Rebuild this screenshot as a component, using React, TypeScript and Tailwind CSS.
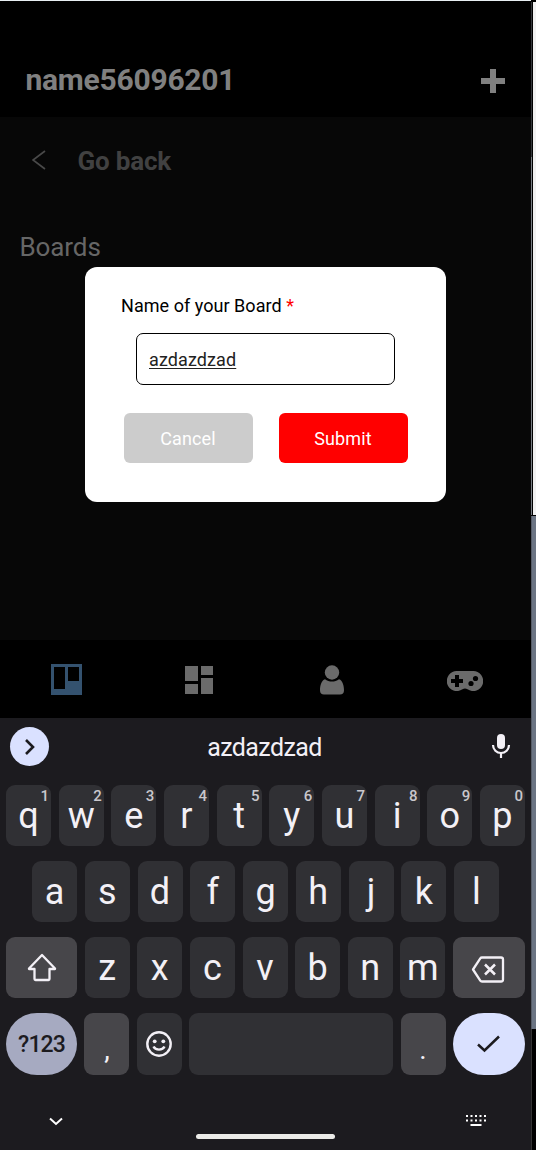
import React from "react";

function Key({ label, hint }: { label: string; hint?: string }) {
  return (
    <div className="relative flex h-[61px] w-[45px] items-center justify-center rounded-[9px] bg-[#303034] text-[36px] leading-none text-[#f3f0f6]">
      <span>{label}</span>
      {hint && (
        <span className="absolute right-[2px] top-[3px] text-[15px] font-medium leading-[16px] text-[#c9c7cc]">{hint}</span>
      )}
    </div>
  );
}

const topRow: [string, string][] = [
  ["q", "1"], ["w", "2"], ["e", "3"], ["r", "4"], ["t", "5"],
  ["y", "6"], ["u", "7"], ["i", "8"], ["o", "9"], ["p", "0"],
];

function Header() {
  return (
    <header className="flex h-[116px] items-start justify-between bg-black pl-[25.5px] pr-[26px] pt-[61px]">
      <h1 className="text-[30px] font-bold leading-[36px] tracking-[-0.25px] text-[#808080]">name56096201</h1>
      <svg className="mt-[7px] block" width="24" height="24" viewBox="0 0 24 24" fill="#808080">
        <path d="M9 0h6v9h9v6h-9v9H9v-9H0V9h9z" />
      </svg>
    </header>
  );
}

function BoardDialog() {
  return (
    <div className="absolute inset-0 flex items-start justify-center pt-[266px]">
      <div className="flex h-[235px] w-[361px] flex-col rounded-[12px] bg-white pt-[27px]">
        <label className="pl-[36px] text-[18px] leading-[24px] tracking-[0.04px] text-black">
          Name of your Board <span className="text-[#ff0000]">*</span>
        </label>
        <div className="ml-[51px] mt-[15px] flex h-[52px] w-[259px] items-center rounded-[7px] border-[1.5px] border-black pl-[12px] text-[18px] tracking-[0.1px] text-[#222]">
          <span className="underline decoration-1 underline-offset-[2px]">azdazdzad</span>
        </div>
        <div className="mt-[28px] flex gap-[26px] pl-[38.5px] text-[18px] text-white">
          <button className="h-[50px] w-[129px] rounded-[6px] bg-[#cccccc] tracking-[0.1px]">Cancel</button>
          <button className="h-[50px] w-[129px] rounded-[6px] bg-[#ff0000] tracking-[0.1px]">Submit</button>
        </div>
      </div>
    </div>
  );
}

function TabBar() {
  return (
    <nav className="grid h-[78px] grid-cols-4 items-center justify-items-center bg-black">
      <svg width="31" height="31" viewBox="0 0 31 31">
        <path fill="#34526f" fillRule="evenodd" d="M0 0h31v31H0zM3 3v22h11V3zM17 3v14h11V3z" />
      </svg>
      <svg className="mt-[2px]" width="28" height="28" viewBox="0 0 28 28" fill="#6b6b6b">
        <path d="M0 0h13v15H0zM16 0h12v9H16zM0 18h13v10H0zM16 12h12v16H16z" />
      </svg>
      <svg className="mt-[1px]" width="24" height="30" viewBox="0 0 24 30" fill="#6b6b6b">
        <circle cx="12" cy="7.5" r="7.2" />
        <path d="M5 14.200c4 3.200 10 3.200 14 0 3.500 1 5 6.500 5 11 0 3-1.500 4.300-4 4.300H4c-2.500 0-4-1.300-4-4.300 0-4.500 1.500-10 5-11z" />
      </svg>
      <svg className="mt-[4px]" width="36" height="20" viewBox="0 0 36 20">
        <path fill="#6b6b6b" d="M10 0h16a10 10 0 1 1-5.500 18.200c-1.500-1-3.500-1-5 0A10 10 0 1 1 10 0z" />
        <path d="M8 4h4v4h4v4h-4v4H8v-4H4V8h4z" />
        <circle cx="28.500" cy="7.500" r="2.600" />
        <circle cx="24" cy="12.500" r="2.600" />
      </svg>
    </nav>
  );
}

function Keyboard() {
  return (
    <section className="flex h-[432px] flex-col bg-[#1c1b1f] text-[#f3f0f6]">
      <div className="grid h-[67px] grid-cols-[1fr_auto_1fr] items-start pl-[10px] pr-[20px]">
        <div className="mt-[9px] flex h-[39px] w-[39px] items-center justify-center rounded-full bg-[#dae1ff]">
          <svg width="12" height="16" viewBox="0 0 12 16" fill="none" stroke="#1c1b1f" strokeWidth="2.600">
            <path d="M2 1l7 7-7 7" />
          </svg>
        </div>
        <div className="ml-[8px] mt-[15px] text-[25px] leading-[30px] tracking-[-0.6px]">azdazdzad</div>
        <svg className="mt-[15px] justify-self-end" width="20" height="26" viewBox="0 0 20 26" fill="#f3f0f6">
          <rect x="6" y="1" width="8" height="15" rx="4" />
          <path d="M2 12a8 8 0 0 0 16 0" fill="none" stroke="#f3f0f6" strokeWidth="2.200" />
          <path d="M8.900 20h2.200v5H8.900z" />
        </svg>
      </div>
      <div className="flex flex-col gap-[15px] px-[6px]">
        <div className="flex justify-between">
          {topRow.map(([letter, digit]) => <Key key={letter} label={letter} hint={digit} />)}
        </div>
        <div className="flex justify-between px-[26px]">
          {"asdfghjkl".split("").map((letter) => <Key key={letter} label={letter} />)}
        </div>
        <div className="flex justify-between">
          <div className="flex h-[61px] w-[71px] items-center justify-center rounded-[9px] bg-[#47464a]">
            <svg width="30" height="29" viewBox="0 0 30 29" fill="none" stroke="#f3f0f6" strokeWidth="2.300" strokeLinejoin="round">
              <path d="M15 2L2 15.500V16h5.500v10a1 1 0 0 0 1 1h13a1 1 0 0 0 1-1V16H28v-.5z" />
            </svg>
          </div>
          {"zxcvbnm".split("").map((letter) => <Key key={letter} label={letter} />)}
          <div className="flex h-[61px] w-[72px] items-center justify-center rounded-[9px] bg-[#47464a]">
            <svg className="mr-[3px] mt-[3px]" width="34" height="27" viewBox="0 0 34 27" fill="none" stroke="#f3f0f6" strokeWidth="2.300" strokeLinejoin="round">
              <path d="M11 1.500h19a2 2 0 0 1 2 2v20a2 2 0 0 1-2 2H11c-.8 0-1.300-.3-1.700-.9L2 13.500l7.300-11.100c.4-.6.900-.9 1.700-.9z" />
              <path d="M14 8.500l10 10M24 8.500l-10 10" strokeWidth="2.500" />
            </svg>
          </div>
        </div>
        <div className="flex justify-between">
          <div className="flex h-[62px] w-[71px] items-center justify-center rounded-full bg-[#a6aac1] pt-[3px] text-[23px] font-medium tracking-[-0.9px] text-[#1c1b1f]">?123</div>
          <div className="flex h-[62px] w-[45px] justify-center rounded-[9px] bg-[#47464a] pt-[21px] text-[28px] leading-[32px]">,</div>
          <div className="flex h-[62px] w-[45px] items-center justify-center rounded-[9px] bg-[#303034]">
            <svg width="26" height="26" viewBox="0 0 26 26" fill="none" stroke="#f3f0f6" strokeWidth="2.400">
              <circle cx="13" cy="13" r="11.700" />
              <path d="M7.500 15.500c2 4.200 9 4.200 11 0" />
              <circle cx="8.700" cy="10.300" r="1.900" fill="#f3f0f6" stroke="none" />
              <circle cx="17.300" cy="10.300" r="1.900" fill="#f3f0f6" stroke="none" />
            </svg>
          </div>
          <div className="h-[62px] w-[204px] rounded-[9px] bg-[#303034]" />
          <div className="flex h-[62px] w-[45px] justify-center rounded-[9px] bg-[#47464a] pt-[21px] text-[28px] leading-[32px]">.</div>
          <div className="flex h-[62px] w-[72px] items-center justify-center rounded-full bg-[#dae1ff]">
            <svg width="23" height="18" viewBox="0 0 23 18" fill="none" stroke="#1c1b1f" strokeWidth="2.500">
              <path d="M1 9.500l6.500 6L22 1.500" />
            </svg>
          </div>
        </div>
      </div>
      <div className="grid grow grid-cols-[1fr_140px_1fr] items-start">
        <svg className="ml-[49px] mt-[42px]" width="14" height="9" viewBox="0 0 14 9" fill="none" stroke="#fff" strokeWidth="2">
          <path d="M1 1.500l6 5.500 6-5.500" />
        </svg>
        <div className="mt-[59px] h-[5px] w-[139px] rounded-full bg-[#ebebe8]" />
        <svg className="mr-[45px] mt-[40px] justify-self-end" width="20" height="12" viewBox="0 0 20 12" fill="#fff">
          {[0, 4.5, 9, 13.5, 18].map((x) => (
            <React.Fragment key={x}>
              <rect x={x} y="0" width="2" height="2" />
              <rect x={x} y="4.500" width="2" height="2" />
            </React.Fragment>
          ))}
          <rect x="4.500" y="9" width="11" height="2" />
        </svg>
      </div>
    </section>
  );
}

export default function App() {
  return (
    <div className="flex h-[1150px] w-[536px] overflow-hidden bg-black font-['Roboto',sans-serif]">
      <div className="flex w-[531px] shrink-0 flex-col border-t border-[#e8eef2]">
        <div className="relative flex h-[639px] flex-col bg-[#070707]">
          <Header />
          <div className="flex h-[88px] items-center pl-[32px]">
            <svg className="mb-[2px]" width="14" height="20" viewBox="0 0 14 20" fill="none" stroke="#494949" strokeWidth="1.700">
              <path d="M13 1L1 10l12 9" />
            </svg>
            <span className="ml-[31.5px] text-[26px] font-bold leading-[30px] tracking-[-0.2px] text-[#414141]">Go back</span>
          </div>
          <h2 className="pl-[19.5px] pt-[26px] text-[26px] leading-[32px] tracking-[-0.1px] text-[#666]">Boards</h2>
          <BoardDialog />
        </div>
        <TabBar />
        <Keyboard />
      </div>
      <div className="flex w-[5px] flex-col">
        <div className="flex h-[516px] border-b border-t-2 border-black">
          <div className="flex w-px flex-col bg-[#34363a]">
            <div className="mt-[155px] grow bg-[#777c82]" />
          </div>
          <div className="w-px bg-black" />
          <div className="grow bg-[#f1f1f1]" />
        </div>
        <div className="h-[513px] border-l border-[#555b66] bg-[#6b7483]" />
        <div className="grow border-l border-[#333] bg-black" />
      </div>
    </div>
  );
}
